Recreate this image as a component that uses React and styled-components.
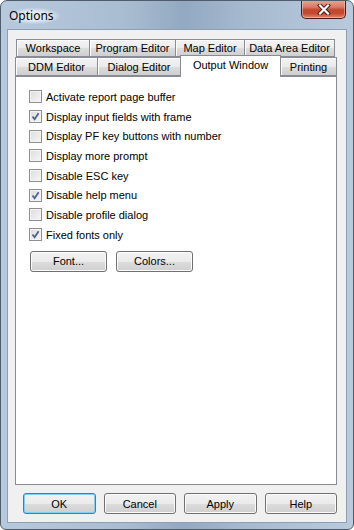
import React from 'react';
import styled, { createGlobalStyle } from 'styled-components';

const Global = createGlobalStyle`
  html, body { margin: 0; padding: 0; background: #fff; }
  body { width: 354px; height: 530px; overflow: hidden; }
`;

const Window = styled.div`
  width: 354px;
  height: 530px;
  box-sizing: border-box;
  border: 1px solid #4e5c6b;
  border-radius: 7px 7px 6px 6px;
  background: linear-gradient(to right, #b7c9dc, #a9bdd2 35%, #93a9c1 52%, #a6bad0 70%, #b9cadc);
  display: flex;
  flex-direction: column;
  overflow: hidden;
  font-family: "Liberation Sans", Arial, sans-serif;
`;

const TitleBar = styled.div`
  height: 28px;
  display: flex;
  align-items: flex-start;
  justify-content: space-between;
  padding-left: 7px;
`;

const Title = styled.div`
  font-family: "Noto Sans", "Open Sans", sans-serif;
  font-size: 12px;
  line-height: 16px;
  margin-top: 7px;
  color: #000;
  padding: 0 6px 0 1px;
  border-radius: 8px;
  background: radial-gradient(ellipse at center, rgba(235, 241, 248, 0.85) 40%, rgba(235, 241, 248, 0) 75%);
`;

const CloseButton = styled.div`
  width: 45px;
  height: 19px;
  margin-right: 7px;
  margin-top: -1px;
  box-sizing: border-box;
  border: 1px solid #4a1c14;
  border-top: none;
  border-radius: 0 0 5px 5px;
  background: linear-gradient(#e7a898 0%, #d57a64 40%, #c2462d 55%, #c74a30 75%, #dd8a6e 100%);
  box-shadow: inset 0 0 0 1px rgba(255, 220, 210, 0.45);
  display: flex;
  align-items: center;
  justify-content: center;
`;

const Client = styled.div`
  flex: 1;
  margin: 0 6px 6px 6px;
  border: 1px solid #8c9fb5;
  background: #f0f0f0;
  display: flex;
  flex-direction: column;
  padding: 9px 9px 7px 7px;
  font-size: 11px;
  color: #000;
`;

const TabStrip = styled.div`
  display: flex;
  flex-direction: column;
  height: 37px;
  position: relative;
  z-index: 1;
`;

const TabRow = styled.div`
  display: flex;
  align-items: flex-end;
  height: ${p => p.$h}px;
  margin-left: ${p => p.$indent}px;
`;

const Tab = styled.div`
  width: ${p => p.$w}px;
  height: ${p => (p.$active ? p.$h + 3 : p.$h)}px;
  margin-bottom: ${p => (p.$active ? -1 : 0)}px;
  box-sizing: border-box;
  border: 1px solid #898c95;
  border-bottom: ${p => (p.$active ? 'none' : '1px solid #898c95')};
  margin-right: -1px;
  background: ${p => (p.$active ? '#fff' : 'linear-gradient(#f3f3f3, #ebebeb 50%, #dddddd 51%, #cfcfcf)')};
  box-shadow: ${p => (p.$active ? 'none' : 'inset 1px 1px 0 #fcfcfc')};
  display: flex;
  align-items: ${p => (p.$active ? 'flex-start' : 'center')};
  padding-top: ${p => (p.$active ? 3 : 0)}px;
  justify-content: center;
  white-space: nowrap;
  font-size: 11px;
  position: relative;
  z-index: ${p => (p.$active ? 2 : 1)};
`;

const Panel = styled.div`
  height: 409px;
  box-sizing: border-box;
  border: 1px solid #898c95;
  background: #fff;
  padding: 10px 0 0 13px;
  display: flex;
  flex-direction: column;
`;

const CheckRow = styled.label`
  display: flex;
  align-items: center;
  height: 19.7px;
  gap: 4px;
  white-space: nowrap;
`;

const Box = styled.span`
  width: 13px;
  height: 13px;
  box-sizing: border-box;
  border: 1px solid #8e8f8f;
  background: linear-gradient(135deg, #dcdcdc, #f6f6f6);
  box-shadow: inset 0 0 0 1px #f4f4f4;
  display: flex;
  align-items: center;
  justify-content: center;
  flex: none;
`;

const ButtonGroup = styled.div`
  display: flex;
  gap: ${p => p.$gap}px;
  margin-top: ${p => p.$top}px;
  padding-left: ${p => p.$left}px;
`;

const Button = styled.div`
  width: ${p => p.$w}px;
  height: 21px;
  box-sizing: border-box;
  border: 1px solid ${p => (p.$default ? '#3c7fb1' : '#707070')};
  border-radius: 3px;
  background: linear-gradient(#f2f2f2 0%, #ebebeb 50%, #dddddd 51%, #cfcfcf 100%);
  box-shadow: ${p => (p.$default ? 'inset 0 0 0 1px #7fd0f5' : 'inset 0 0 0 1px #fbfbfb')};
  display: flex;
  align-items: center;
  justify-content: center;
  font-size: 11px;
`;

const Check = ({ on }) => (
  <Box>
    {on && (
      <svg width="9" height="9" viewBox="0 0 9 9">
        <path d="M1.5 4.5 L3.6 7.2 L7.6 1.2" fill="none" stroke="#4a5f8f" strokeWidth="1.7" />
      </svg>
    )}
  </Box>
);

const row1 = [
  ['Workspace', 74],
  ['Program Editor', 87],
  ['Map Editor', 70],
  ['Data Area Editor', 91],
];

const row2 = [
  ['DDM Editor', 83],
  ['Dialog Editor', 84],
  ['Output Window', 101, true],
  ['Printing', 57],
];

const options = [
  ['Activate report page buffer', false],
  ['Display input fields with frame', true],
  ['Display PF key buttons with number', false],
  ['Display more prompt', false],
  ['Disable ESC key', false],
  ['Disable help menu', true],
  ['Disable profile dialog', false],
  ['Fixed fonts only', true],
];

export default function App() {
  return (
    <>
      <Global />
      <Window>
        <TitleBar>
          <Title>Options</Title>
          <CloseButton>
            <svg width="14" height="11" viewBox="0 0 14 11">
              <path d="M3 1.5 L11 9.5 M11 1.5 L3 9.5" stroke="#3d1a12" strokeWidth="4" strokeLinecap="square" />
              <path d="M3 1.5 L11 9.5 M11 1.5 L3 9.5" stroke="#fff" strokeWidth="2.2" strokeLinecap="square" />
            </svg>
          </CloseButton>
        </TitleBar>
        <Client>
          <TabStrip>
            <TabRow $h={18} $indent={1}>
              {row1.map(([t, w]) => (
                <Tab key={t} $w={w} $h={18}>{t}</Tab>
              ))}
            </TabRow>
            <TabRow $h={19} $indent={0}>
              {row2.map(([t, w, a]) => (
                <Tab key={t} $w={w} $h={19} $active={a}>{t}</Tab>
              ))}
            </TabRow>
          </TabStrip>
          <Panel>
            {options.map(([t, on]) => (
              <CheckRow key={t}>
                <Check on={on} />
                {t}
              </CheckRow>
            ))}
            <ButtonGroup $gap={9} $top={6} $left={1}>
              <Button $w={77}>Font...</Button>
              <Button $w={77}>Colors...</Button>
            </ButtonGroup>
          </Panel>
          <ButtonGroup $gap={8} $top={8} $left={8}>
            <Button $w={73} $default>OK</Button>
            <Button $w={73}>Cancel</Button>
            <Button $w={73}>Apply</Button>
            <Button $w={73}>Help</Button>
          </ButtonGroup>
        </Client>
      </Window>
    </>
  );
}
